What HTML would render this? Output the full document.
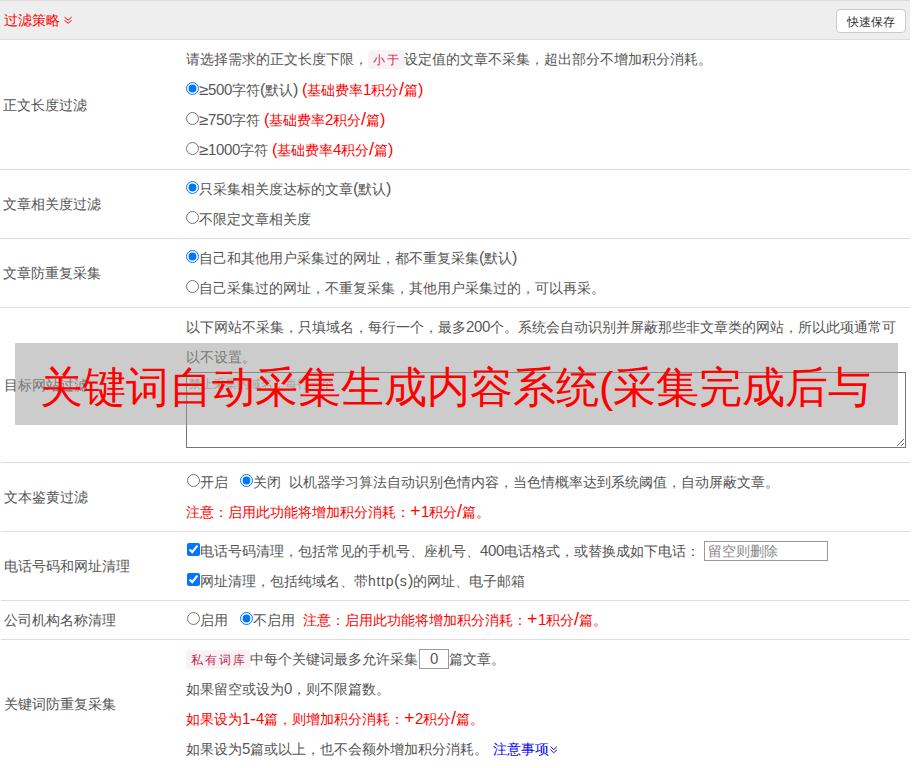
<!DOCTYPE html>
<html><head><meta charset="utf-8">
<style>
@font-face{font-family:"LSD";src:local("Liberation Sans");unicode-range:U+30-39;size-adjust:109%}
@font-face{font-family:"LSD";src:local("Liberation Sans");unicode-range:U+2265;size-adjust:122%}
@font-face{font-family:"LSD";src:local("Liberation Sans");unicode-range:U+2B,U+2D,U+2F;size-adjust:128%}
@font-face{font-family:"LSD";src:local("Liberation Sans");unicode-range:U+28-29;size-adjust:112%}
*{box-sizing:border-box}
html,body{margin:0;padding:0;background:#fff;overflow:hidden}
body{font-family:"LSD","Liberation Sans",sans-serif;font-size:14px;color:#555;width:912px;height:768px;position:relative}
.hdr{position:absolute;left:0;top:0;width:910px;height:40px;background:#eee;border-top:1px solid #ddd;border-bottom:1px solid #ddd}
.hdr .t{position:absolute;left:4px;top:0;line-height:38px;color:#f00;font-size:14px}
.chev{display:inline-block;font-size:11px;transform:rotate(90deg);margin-left:4px}
.btn{position:absolute;left:836px;top:8px;width:70px;height:24px;background:#fff;border:1px solid #ccc;border-radius:4px;font-size:12px;color:#333;text-align:center;line-height:25px}
.row{position:absolute;left:0;width:910px;border-bottom:1px solid #ddd}
.lab{position:absolute;left:3px;top:2px;bottom:0;display:flex;align-items:center}
.cnt{position:absolute;left:186px;top:4px;right:0}
.r2{left:1px;width:909px}
.r2 .cnt{left:185px}
.ln{height:30px;line-height:30px;white-space:nowrap}
.red{color:#f00}
.blue{color:#00f}
code{font-family:"Liberation Sans",sans-serif;background:#f9f2f4;color:#c7254e;border-radius:4px;padding:3px 4px 2px 5px;font-size:12px;letter-spacing:2px;margin-right:-1px}
input[type=radio],input[type=checkbox]{margin:0;width:13px;height:13px;vertical-align:-1px;position:relative;top:-1px}
input.m1{margin-left:1px}
.ov{font-family:"Liberation Sans",sans-serif;position:absolute;left:15px;top:343px;width:883px;height:82px;background:rgba(153,153,153,.5);color:#f00;font-size:43px;line-height:89px;white-space:nowrap;padding-left:25px;z-index:5}
textarea{position:absolute;left:0;top:60px;width:720px;height:76px;border:1px solid #767676;font-family:"Liberation Sans",sans-serif;font-size:12px;line-height:18px;resize:both;padding:2px 2px;background:#fff}
textarea::placeholder{color:#aaa}
.inp{display:inline-block;vertical-align:middle;border:1px solid #999;height:20px;line-height:18px;position:relative;top:-1px;font-size:14px}
</style></head><body>
<div class="hdr"><span class="t">过滤策略</span><svg style="position:absolute;left:64px;top:15px" width="9" height="9" viewBox="0 0 9 9"><path d="M0.5 1.2L4.1 4.2L7.6 1.2M0.5 4.3L4.1 7.3L7.6 4.3" fill="none" stroke="#f00" stroke-width="1"/></svg><div class="btn">快速保存</div></div>

<div class="row" style="top:40px;height:130px">
 <div class="lab">正文长度过滤</div>
 <div class="cnt">
  <div class="ln" style="height:31px;line-height:31px">请选择需求的正文长度下限，<code>小于</code>设定值的文章不采集，超出部分不增加积分消耗。</div>
  <div class="ln"><input type="radio" checked>≥500字符(默认) <span class="red">(基础费率1积分/篇)</span></div>
  <div class="ln"><input type="radio">≥750字符 <span class="red">(基础费率2积分/篇)</span></div>
  <div class="ln"><input type="radio">≥1000字符 <span class="red">(基础费率4积分/篇)</span></div>
 </div>
</div>

<div class="row" style="top:170px;height:69px">
 <div class="lab">文章相关度过滤</div>
 <div class="cnt">
  <div class="ln"><input type="radio" checked>只采集相关度达标的文章(默认)</div>
  <div class="ln"><input type="radio">不限定文章相关度</div>
 </div>
</div>

<div class="row" style="top:239px;height:69px">
 <div class="lab">文章防重复采集</div>
 <div class="cnt">
  <div class="ln"><input type="radio" checked>自己和其他用户采集过的网址，都不重复采集(默认)</div>
  <div class="ln"><input type="radio">自己采集过的网址，不重复采集，其他用户采集过的，可以再采。</div>
 </div>
</div>

<div class="row r2" style="top:308px;height:155px">
 <div class="lab">目标网站过滤</div>
 <div class="cnt">
  <div class="ln">以下网站不采集，只填域名，每行一个，最多200个。系统会自动识别并屏蔽那些非文章类的网站，所以此项通常可</div>
  <div class="ln">以不设置。</div>
  <textarea placeholder="禁止采集的域名，每行一个"></textarea>
 </div>
</div>

<div class="row r2" style="top:463px;height:69px">
 <div class="lab">文本鉴黄过滤</div>
 <div class="cnt">
  <div class="ln"><input type="radio" class="m1">开启<input type="radio" checked style="margin-left:12px">关闭<span style="margin-left:8px">以机器学习算法自动识别色情内容，当色情概率达到系统阈值，自动屏蔽文章。</span></div>
  <div class="ln red">注意：启用此功能将增加积分消耗：+1积分/篇。</div>
 </div>
</div>

<div class="row r2" style="top:532px;height:69px">
 <div class="lab">电话号码和网址清理</div>
 <div class="cnt">
  <div class="ln"><input type="checkbox" checked class="m1">电话号码清理，包括常见的手机号、座机号、400电话格式，或替换成如下电话：<span class="inp" style="margin-left:4px;width:124px;padding-left:3px;color:#888">留空则删除</span></div>
  <div class="ln"><input type="checkbox" checked class="m1">网址清理，包括纯域名、带<span style="letter-spacing:0.7px">http(s)</span>的网址、电子邮箱</div>
 </div>
</div>

<div class="row r2" style="top:601px;height:39px">
 <div class="lab">公司机构名称清理</div>
 <div class="cnt">
  <div class="ln"><input type="radio" class="m1">启用<input type="radio" checked style="margin-left:12px">不启用<span class="red" style="margin-left:8px">注意：启用此功能将增加积分消耗：+1积分/篇。</span></div>
 </div>
</div>

<div class="row r2" style="top:640px;height:140px">
 <div class="lab" style="bottom:12px">关键词防重复采集</div>
 <div class="cnt">
  <div class="ln"><code>私有词库</code>中每个关键词最多允许采集<span class="inp" style="width:30px;margin-left:1px;text-align:center">0</span>篇文章。</div>
  <div class="ln">如果留空或设为0，则不限篇数。</div>
  <div class="ln red">如果设为1-4篇，则增加积分消耗：+2积分/篇。</div>
  <div class="ln">如果设为5篇或以上，也不会额外增加积分消耗。 <span class="blue" style="margin-left:1px">注意事项<svg style="margin-left:1px;vertical-align:0px" width="8" height="8" viewBox="0 0 8 8"><path d="M0.5 0.6L3.7 3.6L6.9 0.6M0.5 3.8L3.7 6.8L6.9 3.8" fill="none" stroke="#00f" stroke-width="0.95"/></svg></span></div>
 </div>
</div>

<div class="ov">关键词自动采集生成内容系统(采集完成后与</div>
</body></html>
